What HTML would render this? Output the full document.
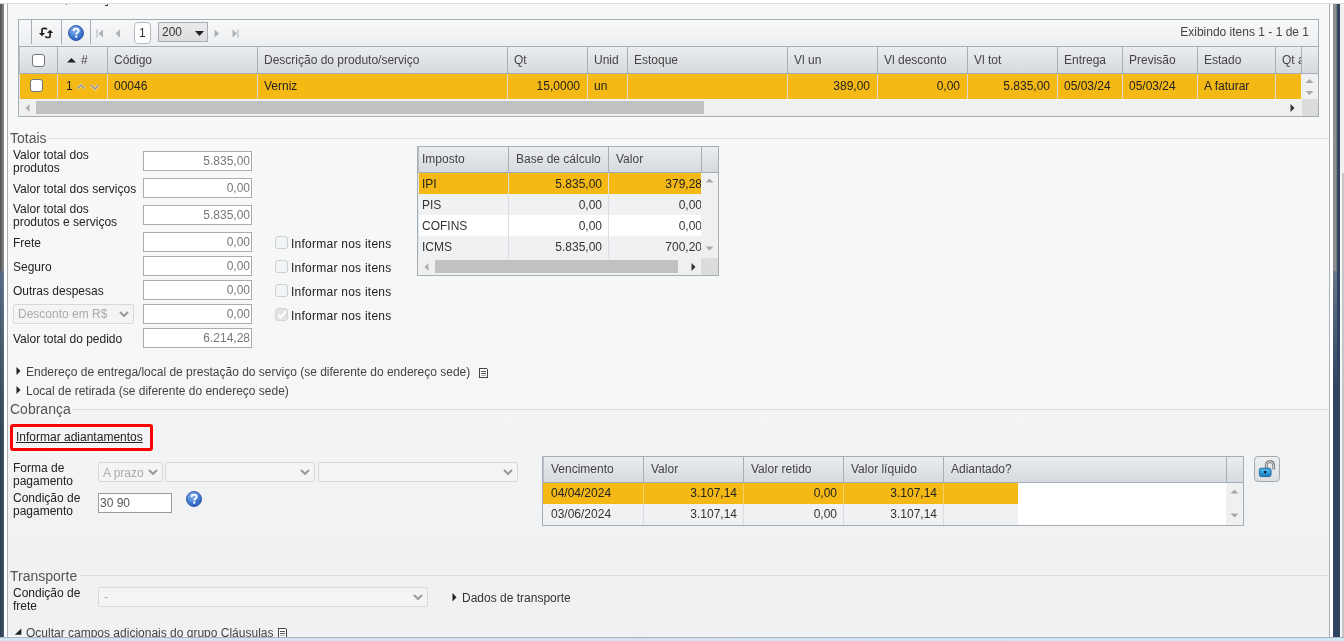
<!DOCTYPE html>
<html><head><meta charset="utf-8"><style>
*{box-sizing:border-box;margin:0;padding:0}
html,body{width:1344px;height:641px;overflow:hidden;background:#fff;font-family:"Liberation Sans",sans-serif;font-size:12px;color:#222}
div{position:absolute}
#root{left:0;top:0;width:1344px;height:641px;will-change:transform}
.t{white-space:nowrap;line-height:14px;font-size:12px}
.hl{height:1px;background:#a5adb7}
.vl{width:1px;background:#a5adb7}
.hdr{background:linear-gradient(#f0f2f4,#d9dce0)}
.org{background:#f5b915}
.inp{background:#fff;border:1px solid #acacac;height:20px;width:109px;left:143px}
.cb{width:13px;height:13px;border:1px solid #cdd0d3;border-radius:3px;background:#f3f4f5;left:275px}
.sel{background:#f4f4f5;border:1px solid #d6d8da;border-radius:2px}
.lg{font-size:14px;color:#555;line-height:16px;white-space:nowrap}
.fl{height:1px;background:#dcdddf}
</style></head><body><div id="root">
<div style="left:0px;top:3px;width:1344px;height:1px;background:#dcdfe1;"></div>
<div style="left:0px;top:4px;width:4px;height:267px;background:linear-gradient(90deg,#4e4e4e,#8e8e8e);"></div>
<div style="left:0px;top:271px;width:4px;height:366px;background:linear-gradient(#50667e,#2c3e55 45%,#2c3e55);"></div>
<div style="left:0px;top:271px;width:4px;height:366px;background:linear-gradient(90deg,rgba(255,255,255,0),rgba(255,255,255,0.12));"></div>
<div style="left:4px;top:4px;width:3px;height:633px;background:#ffffff;"></div>
<div style="left:7px;top:4px;width:1px;height:633px;background:#a9b0b8;"></div>
<div style="left:8px;top:4px;width:1321px;height:633px;background:linear-gradient(#f6f8f8,#f7f8f8 21%,#f5f6f6 63.9%,#f3f4f5 64%,#f0f1f3 90%,#f0f1f3);"></div>
<div style="left:1329px;top:4px;width:1px;height:633px;background:#a9b0b8;"></div>
<div style="left:1330px;top:4px;width:3px;height:633px;background:#ffffff;"></div>
<div style="left:1333px;top:4px;width:7px;height:267px;background:linear-gradient(90deg,#8c8c8c,#909090 45%,#3a4d63 60%,#2c3e55);"></div>
<div style="left:1333px;top:271px;width:7px;height:366px;background:#2e4460;"></div>
<div style="left:1333px;top:271px;width:4px;height:120px;background:linear-gradient(rgba(150,160,170,0.55),rgba(150,160,170,0));"></div>
<div style="left:1340px;top:4px;width:4px;height:169px;background:#f0f0f0;"></div>
<div style="left:1340px;top:173px;width:2px;height:464px;background:#f6f6f6;"></div>
<div style="left:1342px;top:173px;width:2px;height:464px;background:#c6c6c6;"></div>
<div style="left:0px;top:637px;width:1344px;height:1px;background:#a9b0b8;"></div>
<div style="left:0px;top:638px;width:1344px;height:3px;background:#cde8f2;"></div>
<div style="left:66px;top:4px;width:1px;height:1px;background:#666;"></div>
<div style="left:105px;top:5px;width:3px;height:1px;background:#333;"></div>
<div style="left:107px;top:4px;width:1px;height:1px;background:#666;"></div>
<div style="left:18px;top:19px;width:1301px;height:98px;border:1px solid #a5adb7;background:#f0f0f0;"></div>
<div style="left:19px;top:20px;width:1299px;height:26px;background:linear-gradient(#f8f8f9,#eceef0);"></div>
<div style="left:19px;top:46px;width:1299px;height:1px;background:#a5adb7;"></div>
<div style="left:31px;top:20px;width:1px;height:24px;background:#a5adb7;"></div>
<div style="left:61px;top:20px;width:1px;height:24px;background:#a5adb7;"></div>
<div style="left:90px;top:20px;width:1px;height:24px;background:#a5adb7;"></div>
<svg style="position:absolute;left:36px;top:25px" width="20" height="16" viewBox="0 0 20 16">
<path d="M6 9 V5 Q6 3.3 7.7 3.3 H9.3 Q10.4 3.4 10.8 4.6" fill="none" stroke="#222" stroke-width="1.7"/>
<path d="M2.9 8 H9.1 L6 11.2Z" fill="#222"/>
<path d="M14.1 7 V10.8 Q14.1 12.5 12.4 12.5 H10.9 Q9.8 12.4 9.4 11.3" fill="none" stroke="#222" stroke-width="1.7"/>
<path d="M11 7.9 H17.2 L14.1 4.7Z" fill="#222"/>
</svg>
<svg style="position:absolute;left:68px;top:25px" width="16" height="16" viewBox="0 0 16 16">
<defs><radialGradient id="hg68" cx="0.4" cy="0.3" r="0.8"><stop offset="0" stop-color="#8db8ee"/><stop offset="0.6" stop-color="#3f79d0"/><stop offset="1" stop-color="#2453ae"/></radialGradient></defs>
<circle cx="8" cy="8" r="7.5" fill="url(#hg68)" stroke="#2a55a8" stroke-width="0.9"/>
<path d="M5.6 6.1 Q5.6 3.6 8.1 3.6 Q10.6 3.6 10.6 5.8 Q10.6 7.1 9.2 7.8 Q8.3 8.3 8.3 9.4" fill="none" stroke="#fff" stroke-width="1.9"/>
<rect x="7.2" y="10.6" width="2.1" height="2" fill="#fff"/>
</svg>
<svg style="position:absolute;left:96px;top:29px" width="8" height="9"><rect x="0.5" y="0.5" width="1" height="8" fill="#aab0b6"/><path d="M7 0.5 V8.5 L2.5 4.5Z" fill="#aab0b6"/></svg>
<svg style="position:absolute;left:115px;top:29px" width="6" height="9"><path d="M5 0.5 V8.5 L0.5 4.5Z" fill="#aab0b6"/></svg>
<svg style="position:absolute;left:214px;top:29px" width="6" height="9"><path d="M0.5 0.5 V8.5 L5 4.5Z" fill="#aab0b6"/></svg>
<svg style="position:absolute;left:232px;top:29px" width="8" height="9"><path d="M0.5 0.5 V8.5 L5 4.5Z" fill="#aab0b6"/><rect x="5.5" y="0.5" width="1" height="8" fill="#aab0b6"/></svg>
<div style="left:134px;top:22px;width:17px;height:22px;border:1px solid #b5b9bd;border-radius:4px;background:#fff"></div>
<div class="t" style="left:139px;top:26px;color:#333;">1</div>
<div style="left:158px;top:22px;width:50px;height:20px;border:1px solid #a9adb1;background:linear-gradient(#e9eaeb,#dadcde)"></div>
<div class="t" style="left:162px;top:25px;color:#333;">200</div>
<svg style="position:absolute;left:195px;top:31px" width="9" height="5"><path d="M0 0 H9 L4.5 5Z" fill="#222"/></svg>
<div class="t" style="left:1009px;width:300px;text-align:right;top:25px;color:#444;">Exibindo itens 1 - 1 de 1</div>
<div style="left:19px;top:47px;width:1299px;height:26px;background:linear-gradient(#ebedef,#d6d9dd);"></div>
<div style="left:18px;top:73px;width:1301px;height:1px;background:#a5adb7;"></div>
<div style="left:57px;top:47px;width:1px;height:26px;background:#a5adb7;"></div>
<div style="left:107px;top:47px;width:1px;height:26px;background:#a5adb7;"></div>
<div style="left:257px;top:47px;width:1px;height:26px;background:#a5adb7;"></div>
<div style="left:507px;top:47px;width:1px;height:26px;background:#a5adb7;"></div>
<div style="left:587px;top:47px;width:1px;height:26px;background:#a5adb7;"></div>
<div style="left:627px;top:47px;width:1px;height:26px;background:#a5adb7;"></div>
<div style="left:787px;top:47px;width:1px;height:26px;background:#a5adb7;"></div>
<div style="left:877px;top:47px;width:1px;height:26px;background:#a5adb7;"></div>
<div style="left:967px;top:47px;width:1px;height:26px;background:#a5adb7;"></div>
<div style="left:1057px;top:47px;width:1px;height:26px;background:#a5adb7;"></div>
<div style="left:1122px;top:47px;width:1px;height:26px;background:#a5adb7;"></div>
<div style="left:1197px;top:47px;width:1px;height:26px;background:#a5adb7;"></div>
<div style="left:1275px;top:47px;width:1px;height:26px;background:#a5adb7;"></div>
<div style="left:1301px;top:47px;width:1px;height:26px;background:#a5adb7;"></div>
<div style="left:19px;top:74px;width:1282px;height:25px;background:#f5b915;"></div>
<div style="left:19px;top:47px;width:1px;height:26px;background:#b9c0c8;"></div>
<div style="left:19px;top:74px;width:1px;height:25px;background:#dfe5ea;"></div>
<div style="left:57px;top:74px;width:1px;height:25px;background:#d9d9d9;"></div>
<div style="left:107px;top:74px;width:1px;height:25px;background:#d9d9d9;"></div>
<div style="left:257px;top:74px;width:1px;height:25px;background:#d9d9d9;"></div>
<div style="left:507px;top:74px;width:1px;height:25px;background:#d9d9d9;"></div>
<div style="left:587px;top:74px;width:1px;height:25px;background:#d9d9d9;"></div>
<div style="left:627px;top:74px;width:1px;height:25px;background:#d9d9d9;"></div>
<div style="left:787px;top:74px;width:1px;height:25px;background:#d9d9d9;"></div>
<div style="left:877px;top:74px;width:1px;height:25px;background:#d9d9d9;"></div>
<div style="left:967px;top:74px;width:1px;height:25px;background:#d9d9d9;"></div>
<div style="left:1057px;top:74px;width:1px;height:25px;background:#d9d9d9;"></div>
<div style="left:1122px;top:74px;width:1px;height:25px;background:#d9d9d9;"></div>
<div style="left:1197px;top:74px;width:1px;height:25px;background:#d9d9d9;"></div>
<div style="left:1275px;top:74px;width:1px;height:25px;background:#d9d9d9;"></div>
<div style="left:1302px;top:74px;width:16px;height:25px;background:#f0f0f0;"></div>
<div style="left:1302px;top:99px;width:16px;height:17px;background:#dcdcdc;"></div>
<div style="left:32px;top:54px;width:13px;height:13px;border:1px solid #6f7478;border-radius:3px;background:#fff"></div>
<svg style="position:absolute;left:67px;top:58px" width="9" height="5"><path d="M0 4.6 H9 L4.5 0Z" fill="#222"/></svg>
<div class="t" style="left:81px;top:53px;color:#444;">#</div>
<div class="t" style="left:114px;top:53px;color:#444;">Código</div>
<div class="t" style="left:264px;top:53px;color:#444;">Descrição do produto/serviço</div>
<div class="t" style="left:514px;top:53px;color:#444;">Qt</div>
<div class="t" style="left:594px;top:53px;color:#444;">Unid</div>
<div class="t" style="left:634px;top:53px;color:#444;">Estoque</div>
<div class="t" style="left:794px;top:53px;color:#444;">Vl un</div>
<div class="t" style="left:884px;top:53px;color:#444;">Vl desconto</div>
<div class="t" style="left:974px;top:53px;color:#444;">Vl tot</div>
<div class="t" style="left:1064px;top:53px;color:#444;">Entrega</div>
<div class="t" style="left:1129px;top:53px;color:#444;">Previsão</div>
<div class="t" style="left:1204px;top:53px;color:#444;">Estado</div>
<div class="t" style="left:1282px;top:53px;color:#444;">Qt a</div>
<div style="left:1302px;top:47px;width:16px;height:26px;background:linear-gradient(#ebedef,#d6d9dd);"></div>
<div style="left:1301px;top:47px;width:1px;height:26px;background:#a5adb7;"></div>
<div style="left:30px;top:79px;width:13px;height:13px;border:1px solid #6f7478;border-radius:3px;background:#fff"></div>
<div class="t" style="left:66px;top:79px;color:#222;">1</div>
<svg style="position:absolute;left:76px;top:83px" width="24" height="8"><path d="M1.5 5.5 L5 2 L8.5 5.5" fill="none" stroke="#fbe9b0" stroke-width="2.6"/><path d="M15 2 L19 6 L22.5 2" fill="none" stroke="#fbe9b0" stroke-width="2.6"/><path d="M1.5 5.5 L5 2 L8.5 5.5" fill="none" stroke="#8c8c8c" stroke-width="1.4"/><path d="M15 2 L19 6 L22.5 2" fill="none" stroke="#8c8c8c" stroke-width="1.4"/></svg>
<div class="t" style="left:114px;top:79px;color:#222;">00046</div>
<div class="t" style="left:264px;top:79px;color:#222;">Verniz</div>
<div class="t" style="left:280px;width:300px;text-align:right;top:79px;color:#222;">15,0000</div>
<div class="t" style="left:594px;top:79px;color:#222;">un</div>
<div class="t" style="left:570px;width:300px;text-align:right;top:79px;color:#222;">389,00</div>
<div class="t" style="left:660px;width:300px;text-align:right;top:79px;color:#222;">0,00</div>
<div class="t" style="left:750px;width:300px;text-align:right;top:79px;color:#222;">5.835,00</div>
<div class="t" style="left:1064px;top:79px;color:#222;">05/03/24</div>
<div class="t" style="left:1129px;top:79px;color:#222;">05/03/24</div>
<div class="t" style="left:1204px;top:79px;color:#222;">A faturar</div>
<svg style="position:absolute;left:1305px;top:79px" width="9" height="17"><path d="M0.5 4 L4.5 0 L8.5 4Z" fill="#a8a8a8"/><path d="M0.5 12 L4.5 16 L8.5 12Z" fill="#a8a8a8"/></svg>
<div style="left:36px;top:101px;width:668px;height:13px;background:#c1c1c1;"></div>
<svg style="position:absolute;left:25px;top:104px" width="5" height="8"><path d="M4.5 0 V8 L0.5 4Z" fill="#b0b0b0"/></svg>
<svg style="position:absolute;left:1290px;top:104px" width="5" height="8"><path d="M0.5 0 V8 L4.5 4Z" fill="#333"/></svg>
<div class="lg" style="left:10px;top:130px">Totais</div>
<div style="left:49px;top:138px;width:1280px;height:1px;background:#dcdddf;"></div>
<div class="t" style="left:13px;top:148px;color:#222;">Valor total dos</div>
<div class="t" style="left:13px;top:161px;color:#222;">produtos</div>
<div class="t" style="left:13px;top:182px;color:#222;">Valor total dos serviços</div>
<div class="t" style="left:13px;top:202px;color:#222;">Valor total dos</div>
<div class="t" style="left:13px;top:215px;color:#222;">produtos e serviços</div>
<div class="t" style="left:13px;top:236px;color:#222;">Frete</div>
<div class="t" style="left:13px;top:260px;color:#222;">Seguro</div>
<div class="t" style="left:13px;top:284px;color:#222;">Outras despesas</div>
<div class="t" style="left:13px;top:332px;color:#222;">Valor total do pedido</div>
<div class="inp" style="top:151px"></div>
<div class="t" style="left:-50px;width:300px;text-align:right;top:154px;color:#777;">5.835,00</div>
<div class="inp" style="top:178px"></div>
<div class="t" style="left:-50px;width:300px;text-align:right;top:181px;color:#777;">0,00</div>
<div class="inp" style="top:205px"></div>
<div class="t" style="left:-50px;width:300px;text-align:right;top:208px;color:#777;">5.835,00</div>
<div class="inp" style="top:232px"></div>
<div class="t" style="left:-50px;width:300px;text-align:right;top:235px;color:#777;">0,00</div>
<div class="inp" style="top:256px"></div>
<div class="t" style="left:-50px;width:300px;text-align:right;top:259px;color:#777;">0,00</div>
<div class="inp" style="top:280px"></div>
<div class="t" style="left:-50px;width:300px;text-align:right;top:283px;color:#777;">0,00</div>
<div class="inp" style="top:304px"></div>
<div class="t" style="left:-50px;width:300px;text-align:right;top:307px;color:#777;">0,00</div>
<div class="inp" style="top:328px"></div>
<div class="t" style="left:-50px;width:300px;text-align:right;top:331px;color:#777;">6.214,28</div>
<div class="cb" style="top:236px"></div>
<div class="t" style="left:291px;top:237px;color:#222;letter-spacing:0.25px">Informar nos itens</div>
<div class="cb" style="top:260px"></div>
<div class="t" style="left:291px;top:261px;color:#222;letter-spacing:0.25px">Informar nos itens</div>
<div class="cb" style="top:284px"></div>
<div class="t" style="left:291px;top:285px;color:#222;letter-spacing:0.25px">Informar nos itens</div>
<div class="cb" style="top:308px;background:#e2e3e4;border-color:#d2d4d6"></div>
<svg style="position:absolute;left:277px;top:310px" width="10" height="9"><path d="M1 4.5 L3.8 7.5 L9 1" fill="none" stroke="#fff" stroke-width="2"/></svg>
<div class="t" style="left:291px;top:309px;color:#222;letter-spacing:0.25px">Informar nos itens</div>
<div class="sel" style="left:13px;top:304px;width:121px;height:20px"></div>
<div class="t" style="left:18px;top:307px;color:#aaa;">Desconto em R$</div>
<svg style="position:absolute;left:119px;top:311px" width="10" height="6"><path d="M1 1 L5 5 L9 1" fill="none" stroke="#999" stroke-width="2"/></svg>
<div style="left:417px;top:146px;width:302px;height:130px;border:1px solid #a5adb7;background:#f0f0f0;"></div>
<div style="left:418px;top:147px;width:300px;height:25px;background:linear-gradient(#ebedef,#d6d9dd);"></div>
<div style="left:418px;top:172px;width:300px;height:1px;background:#a5adb7;"></div>
<div style="left:418px;top:147px;width:1px;height:25px;background:#b9c0c8;"></div>
<div style="left:508px;top:147px;width:1px;height:25px;background:#a5adb7;"></div>
<div style="left:608px;top:147px;width:1px;height:25px;background:#a5adb7;"></div>
<div style="left:701px;top:147px;width:1px;height:25px;background:#a5adb7;"></div>
<div class="t" style="left:422px;top:152px;color:#444;">Imposto</div>
<div class="t" style="left:516px;top:152px;color:#444;">Base de cálculo</div>
<div class="t" style="left:616px;top:152px;color:#444;">Valor</div>
<div style="left:418px;top:173px;width:283px;height:21px;background:#f5b915;"></div>
<div style="left:418px;top:173px;width:1px;height:21px;background:#e3e8ec;"></div>
<div class="t" style="left:422px;top:177px;color:#222;">IPI</div>
<div class="t" style="left:302px;width:300px;text-align:right;top:177px;color:#222;">5.835,00</div>
<div class="t" style="left:402px;width:300px;text-align:right;top:177px;color:#222;">379,28</div>
<div style="left:418px;top:194px;width:283px;height:21px;background:#f0f1f3;"></div>
<div style="left:418px;top:194px;width:1px;height:21px;background:#e3e8ec;"></div>
<div class="t" style="left:422px;top:198px;color:#333;">PIS</div>
<div class="t" style="left:302px;width:300px;text-align:right;top:198px;color:#333;">0,00</div>
<div class="t" style="left:402px;width:300px;text-align:right;top:198px;color:#333;">0,00</div>
<div style="left:418px;top:215px;width:283px;height:21px;background:#ffffff;"></div>
<div style="left:418px;top:215px;width:1px;height:21px;background:#e3e8ec;"></div>
<div class="t" style="left:422px;top:219px;color:#333;">COFINS</div>
<div class="t" style="left:302px;width:300px;text-align:right;top:219px;color:#333;">0,00</div>
<div class="t" style="left:402px;width:300px;text-align:right;top:219px;color:#333;">0,00</div>
<div style="left:418px;top:236px;width:283px;height:22px;background:#f0f1f3;"></div>
<div style="left:418px;top:236px;width:1px;height:22px;background:#e3e8ec;"></div>
<div class="t" style="left:422px;top:240px;color:#333;">ICMS</div>
<div class="t" style="left:302px;width:300px;text-align:right;top:240px;color:#333;">5.835,00</div>
<div class="t" style="left:402px;width:300px;text-align:right;top:240px;color:#333;">700,20</div>
<div style="left:508px;top:173px;width:1px;height:85px;background:#dcdde0;"></div>
<div style="left:608px;top:173px;width:1px;height:85px;background:#dcdde0;"></div>
<div style="left:701px;top:173px;width:17px;height:85px;background:#f0f0f0;"></div>
<div style="left:701px;top:258px;width:17px;height:17px;background:#dcdcdc;"></div>
<div style="left:435px;top:260px;width:243px;height:13px;background:#c1c1c1;"></div>
<svg style="position:absolute;left:705px;top:178px" width="9" height="5"><path d="M0.5 4.5 L4.5 0.5 L8.5 4.5Z" fill="#a8a8a8"/></svg>
<svg style="position:absolute;left:705px;top:246px" width="9" height="5"><path d="M0.5 0.5 L4.5 4.5 L8.5 0.5Z" fill="#a8a8a8"/></svg>
<svg style="position:absolute;left:424px;top:263px" width="5" height="8"><path d="M4.5 0 V8 L0.5 4Z" fill="#b0b0b0"/></svg>
<svg style="position:absolute;left:691px;top:263px" width="5" height="8"><path d="M0.5 0 V8 L4.5 4Z" fill="#333"/></svg>
<svg style="position:absolute;left:16px;top:367px" width="5" height="8"><path d="M0.5 0 V8 L4.5 4Z" fill="#222"/></svg>
<div class="t" style="left:26px;top:365px;color:#444;">Endereço de entrega/local de prestação do serviço (se diferente do endereço sede)</div>
<svg style="position:absolute;left:479px;top:368px" width="9" height="10" shape-rendering="crispEdges"><path d="M0.5 0.5 H7.5 L8.5 1.5 V9.5 H0.5Z" fill="#fff" stroke="#444" stroke-width="1"/><path d="M2 3.5 H7 M2 5.5 H7" stroke="#555" stroke-width="1"/><path d="M2 7.5 H7" stroke="#aaa" stroke-width="1"/></svg>
<svg style="position:absolute;left:16px;top:386px" width="5" height="8"><path d="M0.5 0 V8 L4.5 4Z" fill="#222"/></svg>
<div class="t" style="left:26px;top:384px;color:#444;">Local de retirada (se diferente do endereço sede)</div>
<div class="lg" style="left:10px;top:401px">Cobrança</div>
<div style="left:72px;top:409px;width:1257px;height:1px;background:#dcdddf;"></div>
<div style="left:10px;top:424px;width:143px;height:27px;border:3px solid #ff0000;border-radius:3px"></div>
<div class="t" style="left:16px;top:430px;color:#222;text-decoration:underline">Informar adiantamentos</div>
<div class="t" style="left:13px;top:461px;color:#222;">Forma de</div>
<div class="t" style="left:13px;top:474px;color:#222;">pagamento</div>
<div class="t" style="left:13px;top:491px;color:#222;">Condição de</div>
<div class="t" style="left:13px;top:504px;color:#222;">pagamento</div>
<div class="sel" style="left:98px;top:462px;width:65px;height:20px"></div>
<div class="t" style="left:103px;top:466px;color:#aaa;">A prazo</div>
<svg style="position:absolute;left:148px;top:469px" width="10" height="6"><path d="M1 1 L5 5 L9 1" fill="none" stroke="#999" stroke-width="2"/></svg>
<div class="sel" style="left:165px;top:462px;width:150px;height:20px"></div>
<svg style="position:absolute;left:300px;top:469px" width="10" height="6"><path d="M1 1 L5 5 L9 1" fill="none" stroke="#999" stroke-width="2"/></svg>
<div class="sel" style="left:318px;top:462px;width:200px;height:20px"></div>
<svg style="position:absolute;left:503px;top:469px" width="10" height="6"><path d="M1 1 L5 5 L9 1" fill="none" stroke="#999" stroke-width="2"/></svg>
<div style="left:98px;top:493px;width:74px;height:20px;border:1px solid #9c9c9c;background:#fff"></div>
<div class="t" style="left:100px;top:496px;color:#555;">30 90</div>
<svg style="position:absolute;left:186px;top:491px" width="16" height="16" viewBox="0 0 16 16">
<defs><radialGradient id="hg186" cx="0.4" cy="0.3" r="0.8"><stop offset="0" stop-color="#8db8ee"/><stop offset="0.6" stop-color="#3f79d0"/><stop offset="1" stop-color="#2453ae"/></radialGradient></defs>
<circle cx="8" cy="8" r="7.5" fill="url(#hg186)" stroke="#2a55a8" stroke-width="0.9"/>
<path d="M5.6 6.1 Q5.6 3.6 8.1 3.6 Q10.6 3.6 10.6 5.8 Q10.6 7.1 9.2 7.8 Q8.3 8.3 8.3 9.4" fill="none" stroke="#fff" stroke-width="1.9"/>
<rect x="7.2" y="10.6" width="2.1" height="2" fill="#fff"/>
</svg>
<div style="left:542px;top:456px;width:702px;height:70px;border:1px solid #a5adb7;background:#fff;"></div>
<div style="left:543px;top:457px;width:700px;height:25px;background:linear-gradient(#ebedef,#d6d9dd);"></div>
<div style="left:543px;top:482px;width:700px;height:1px;background:#a5adb7;"></div>
<div style="left:643px;top:457px;width:1px;height:25px;background:#a5adb7;"></div>
<div style="left:743px;top:457px;width:1px;height:25px;background:#a5adb7;"></div>
<div style="left:843px;top:457px;width:1px;height:25px;background:#a5adb7;"></div>
<div style="left:943px;top:457px;width:1px;height:25px;background:#a5adb7;"></div>
<div style="left:1226px;top:457px;width:1px;height:25px;background:#a5adb7;"></div>
<div class="t" style="left:551px;top:462px;color:#444;">Vencimento</div>
<div class="t" style="left:651px;top:462px;color:#444;">Valor</div>
<div class="t" style="left:751px;top:462px;color:#444;">Valor retido</div>
<div class="t" style="left:851px;top:462px;color:#444;">Valor líquido</div>
<div class="t" style="left:951px;top:462px;color:#444;">Adiantado?</div>
<div style="left:543px;top:483px;width:475px;height:21px;background:#f5b915;"></div>
<div style="left:543px;top:457px;width:1px;height:25px;background:#b9c0c8;"></div>
<div style="left:543px;top:504px;width:475px;height:21px;background:#f0f1f3;"></div>
<div style="left:643px;top:483px;width:1px;height:21px;background:#f7cf63;"></div>
<div style="left:643px;top:504px;width:1px;height:21px;background:#dcdde0;"></div>
<div style="left:743px;top:483px;width:1px;height:21px;background:#f7cf63;"></div>
<div style="left:743px;top:504px;width:1px;height:21px;background:#dcdde0;"></div>
<div style="left:843px;top:483px;width:1px;height:21px;background:#f7cf63;"></div>
<div style="left:843px;top:504px;width:1px;height:21px;background:#dcdde0;"></div>
<div style="left:943px;top:483px;width:1px;height:21px;background:#f7cf63;"></div>
<div style="left:943px;top:504px;width:1px;height:21px;background:#dcdde0;"></div>
<div style="left:1226px;top:483px;width:17px;height:42px;background:#f0f0f0;"></div>
<div class="t" style="left:551px;top:486px;color:#222;">04/04/2024</div>
<div class="t" style="left:437px;width:300px;text-align:right;top:486px;color:#222;">3.107,14</div>
<div class="t" style="left:537px;width:300px;text-align:right;top:486px;color:#222;">0,00</div>
<div class="t" style="left:637px;width:300px;text-align:right;top:486px;color:#222;">3.107,14</div>
<div class="t" style="left:551px;top:507px;color:#333;">03/06/2024</div>
<div class="t" style="left:437px;width:300px;text-align:right;top:507px;color:#333;">3.107,14</div>
<div class="t" style="left:537px;width:300px;text-align:right;top:507px;color:#333;">0,00</div>
<div class="t" style="left:637px;width:300px;text-align:right;top:507px;color:#333;">3.107,14</div>
<svg style="position:absolute;left:1230px;top:489px" width="9" height="5"><path d="M0.5 4.5 L4.5 0.5 L8.5 4.5Z" fill="#a8a8a8"/></svg>
<svg style="position:absolute;left:1230px;top:513px" width="9" height="5"><path d="M0.5 0.5 L4.5 4.5 L8.5 0.5Z" fill="#a8a8a8"/></svg>
<div style="left:1254px;top:456px;width:26px;height:26px;border:1px solid #a5a9ae;border-radius:4px;background:linear-gradient(#eceeef,#dcdfe2)"></div>
<svg style="position:absolute;left:1258px;top:460px" width="20" height="18" viewBox="0 0 20 18">
<defs><linearGradient id="lk" x1="0" y1="0" x2="0" y2="1"><stop offset="0" stop-color="#59bdf0"/><stop offset="0.5" stop-color="#2f9ddc"/><stop offset="1" stop-color="#1d78bb"/></linearGradient></defs>
<path d="M8.3 9 V5.2 Q8.3 1.6 12 1.6 Q15.7 1.6 15.7 5.2 V9.6" fill="none" stroke="#6c6c6c" stroke-width="2.6"/>
<path d="M8.3 9 V5.2 Q8.3 1.6 12 1.6 Q15.7 1.6 15.7 5.2 V9.6" fill="none" stroke="#f2f2f2" stroke-width="0.9"/>
<rect x="1.4" y="8.2" width="11.6" height="8.4" rx="2" fill="url(#lk)" stroke="#1a5f95" stroke-width="0.9"/>
<rect x="6.2" y="11" width="2" height="2.2" fill="#111"/>
</svg>
<div class="lg" style="left:10px;top:568px">Transporte</div>
<div style="left:80px;top:575px;width:1249px;height:1px;background:#dcdddf;"></div>
<div class="t" style="left:13px;top:586px;color:#222;">Condição de</div>
<div class="t" style="left:13px;top:599px;color:#222;">frete</div>
<div class="sel" style="left:98px;top:587px;width:330px;height:20px"></div>
<div class="t" style="left:104px;top:590px;color:#aaa;">-</div>
<svg style="position:absolute;left:413px;top:594px" width="10" height="6"><path d="M1 1 L5 5 L9 1" fill="none" stroke="#999" stroke-width="2"/></svg>
<svg style="position:absolute;left:452px;top:593px" width="5" height="9"><path d="M0.5 0 V8.5 L4.5 4.25Z" fill="#222"/></svg>
<div class="t" style="left:462px;top:591px;color:#333;">Dados de transporte</div>
<div style="left:8px;top:636px;width:1321px;height:1px;background:#f6f6f6;"></div>
<svg style="position:absolute;left:14px;top:628px" width="8" height="8"><path d="M7.3 0.6 V6.8 H0.8Z" fill="#222"/></svg>
<div class="t" style="left:26px;top:626px;color:#444;">Ocultar campos adicionais do grupo Cláusulas</div>
<svg style="position:absolute;left:278px;top:628px" width="9" height="10" shape-rendering="crispEdges"><path d="M0.5 0.5 H7.5 L8.5 1.5 V9.5 H0.5Z" fill="#fff" stroke="#444" stroke-width="1"/><path d="M2 3.5 H7 M2 5.5 H7" stroke="#555" stroke-width="1"/><path d="M2 7.5 H7" stroke="#aaa" stroke-width="1"/></svg>
<div style="left:0px;top:637px;width:1344px;height:1px;background:#a9b1bc;"></div>
<div style="left:0px;top:638px;width:1344px;height:3px;background:linear-gradient(90deg,#d3e4f2,#d5e0f0 45%,#cfe6f4 75%,#cfe7f4);"></div>
</div></body></html>
